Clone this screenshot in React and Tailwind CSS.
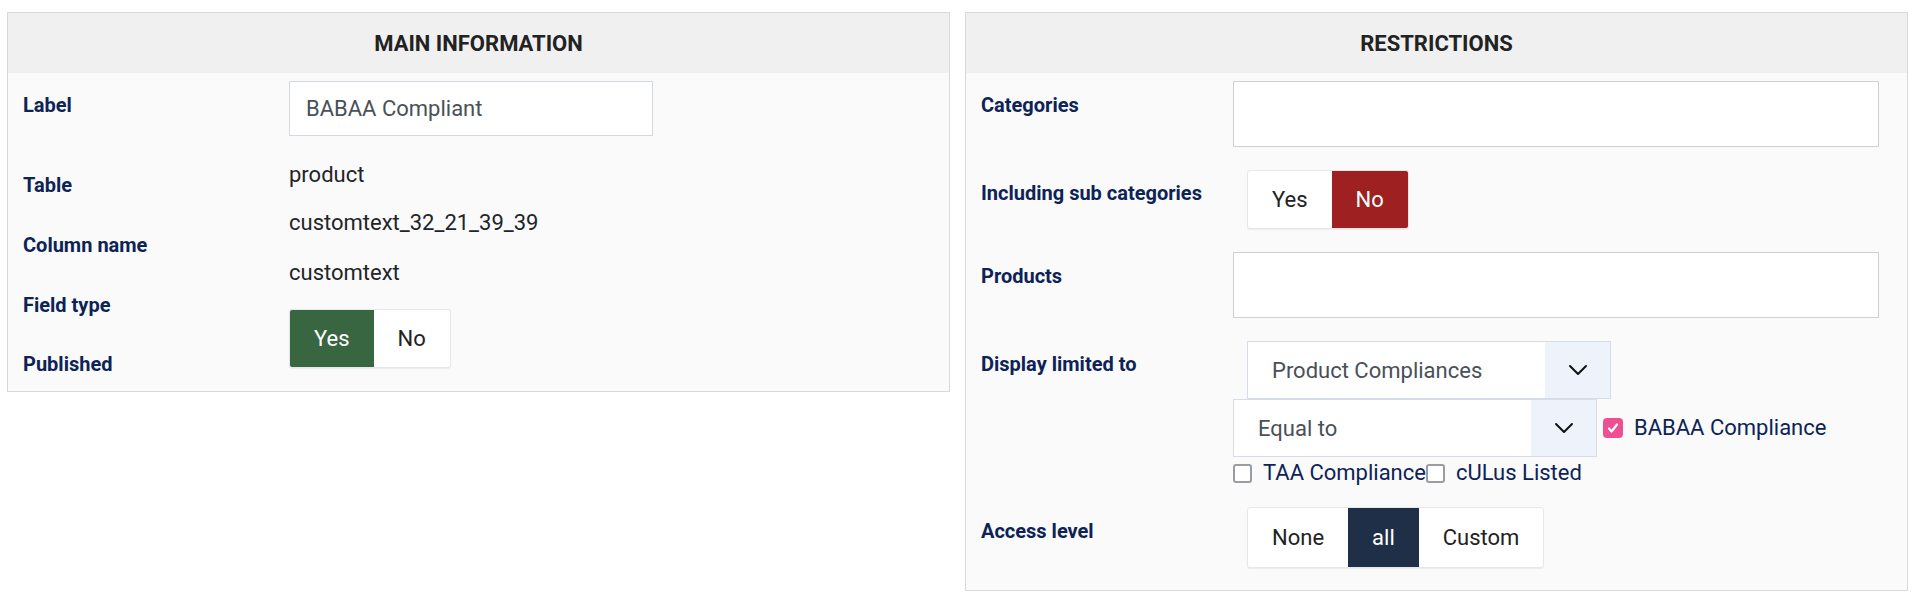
import React from 'react';

const navy = 'text-[#0d2357]';

function Toggle({ options, active, activeClass, className = '' }) {
  return (
    <div className={`inline-flex border border-[#e4e7eb] rounded-[3px] shadow-[0_1px_1px_rgba(0,0,0,0.06)] bg-white overflow-hidden ${className}`}>
      {options.map(opt => (
        <div
          key={opt}
          className={`px-6 flex items-center text-[22px] ${opt === active ? activeClass : 'text-[#222]'}`}
        >
          {opt}
        </div>
      ))}
    </div>
  );
}

function Chevron() {
  return (
    <svg width="22" height="14" viewBox="0 0 22 14" fill="none">
      <path d="M3 3l8 8 8-8" stroke="#111" strokeWidth="2" strokeLinecap="round" strokeLinejoin="round" />
    </svg>
  );
}

function Select({ value, className = '' }) {
  return (
    <div className={`flex w-[364px] h-[58px] border border-[#d6dde8] bg-white ${className}`}>
      <div className="flex-1 flex items-center pl-6 text-[22px] text-[#495057]">{value}</div>
      <div className="w-[65px] bg-[#eef3fb] flex items-center justify-center">
        <Chevron />
      </div>
    </div>
  );
}

function Check({ checked, label }) {
  return (
    <label className="inline-flex items-center">
      {checked ? (
        <span className="shrink-0 w-[20px] h-[20px] rounded-[4px] bg-[#ee4f93] flex items-center justify-center">
          <svg width="14" height="14" viewBox="0 0 14 14" fill="none">
            <path d="M3 7.5l2.6 3L11 3.5" stroke="#fff" strokeWidth="2.2" strokeLinecap="round" strokeLinejoin="round" />
          </svg>
        </span>
      ) : (
        <span className="shrink-0 block w-[19px] h-[19px] rounded-[3px] border-2 border-[#9b9ba6] bg-white" />
      )}
      <span className={`ml-[11px] text-[22px] leading-[26px] ${navy}`}>{label}</span>
    </label>
  );
}

function Panel({ title, children }) {
  return (
    <div className="flex-1 border border-[#d9d9d9] bg-[#fafafa]">
      <div className="h-[60px] bg-[#f0f0f0] flex items-center justify-center text-[22px] font-bold text-[#222]">
        {title}
      </div>
      {children}
    </div>
  );
}

export default function App() {
  return (
    <div className="w-full h-[601px] bg-white flex items-start gap-[15px] pl-[7px] pr-[12px] pt-[12px] font-['Roboto',sans-serif]">
      {/* Main information */}
      <Panel title="MAIN INFORMATION">
        <div className="flex pl-[15px]">
          <div className={`w-[266px] flex flex-col text-[20px] leading-6 font-bold ${navy}`}>
            <span className="mt-[20px]">Label</span>
            <span className="mt-[56px]">Table</span>
            <span className="mt-[36px]">Column name</span>
            <span className="mt-[36px]">Field type</span>
            <span className="mt-[35px] mb-[15px]">Published</span>
          </div>
          <div className="flex flex-col items-start text-[22px] leading-[30px] text-[#212529]">
            <div className="mt-[8px] w-[364px] h-[55px] border border-[#d3d9e1] bg-white flex items-center pl-4 text-[#495057]">
              BABAA Compliant
            </div>
            <span className="mt-[24px]">product</span>
            <span className="mt-[18px]">customtext_32_21_39_39</span>
            <span className="mt-[20px]">customtext</span>
            <Toggle
              className="mt-[21px] h-[59px]"
              options={['Yes', 'No']}
              active="Yes"
              activeClass="bg-[#386641] text-white"
            />
          </div>
        </div>
      </Panel>

      {/* Restrictions */}
      <Panel title="RESTRICTIONS">
        <div className="flex pl-[15px] pr-[28px]">
          <div className={`w-[252px] shrink-0 flex flex-col text-[20px] leading-6 font-bold ${navy}`}>
            <span className="mt-[20px]">Categories</span>
            <span className="mt-[64px]">Including sub categories</span>
            <span className="mt-[59px]">Products</span>
            <span className="mt-[64px]">Display limited to</span>
            <span className="mt-[143px] mb-[47px]">Access level</span>
          </div>
          <div className="flex-1 flex flex-col items-start pb-[22px]">
            <div className="mt-[8px] w-full h-[66px] border border-[#cfcfcf] bg-white" />
            <Toggle
              className="mt-[23px] ml-[14px] h-[59px]"
              options={['Yes', 'No']}
              active="No"
              activeClass="bg-[#9e2020] text-white"
            />
            <div className="mt-[23px] w-full h-[66px] border border-[#cfcfcf] bg-white" />
            <Select value="Product Compliances" className="mt-[23px] ml-[14px]" />
            <div className="flex items-center">
              <Select value="Equal to" />
              <span className="ml-[6px]">
                <Check checked label="BABAA Compliance" />
              </span>
            </div>
            <div className="mt-[3px] flex items-center">
              <Check label="TAA Compliance" />
              <Check label="cULus Listed" />
            </div>
            <Toggle
              className="mt-[21px] ml-[14px] h-[61px]"
              options={['None', 'all', 'Custom']}
              active="all"
              activeClass="bg-[#1e2f47] text-white"
            />
          </div>
        </div>
      </Panel>
    </div>
  );
}
